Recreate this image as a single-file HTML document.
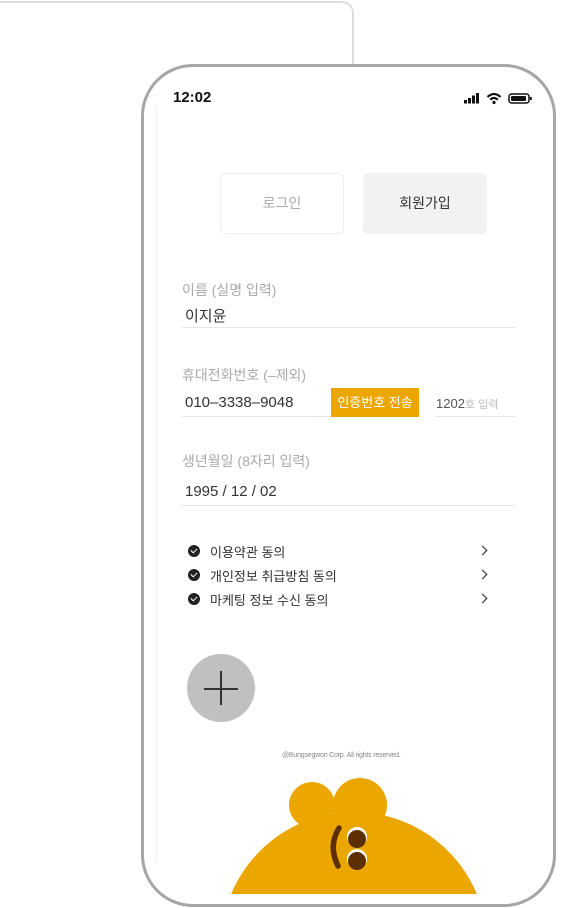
<!DOCTYPE html>
<html><head><meta charset="utf-8"><style>
*{margin:0;padding:0;box-sizing:border-box}
html,body{width:566px;height:908px;overflow:hidden}
body{background:#fff;position:relative;font-family:"Liberation Sans","Noto Sans CJK KR",sans-serif}
.back{position:absolute;left:-20px;top:1px;width:374px;height:860px;border:2px solid #ddd;border-bottom:none;border-radius:12px 12px 0 0}
.phone{position:absolute;left:141px;top:64px;width:415px;height:843px;border:3px solid #a6a6a6;border-radius:52px;background:#fff;overflow:hidden}
.abs{position:absolute}
.lbl{color:#aaa;font-size:14px}
.val{color:#333;font-size:15px}
.line{height:1px;background:#e6e6e6}
.chk{position:absolute;left:188px;width:12px;height:12px;border-radius:50%;background:#222}
.chk:after{content:"";position:absolute;left:3px;top:2.5px;width:5px;height:3px;border-left:1.6px solid #fff;border-bottom:1.6px solid #fff;transform:rotate(-45deg)}
.ag{position:absolute;left:210px;font-size:13px;color:#333}
.arr{position:absolute;left:479px;width:7px;height:7px;border-top:1.8px solid #222;border-right:1.8px solid #222;transform:rotate(45deg)}
</style></head><body>
<div class="back"></div>
<div class="phone"></div>
<div class="abs" style="left:156px;top:105px;width:1px;height:756px;background:#eee"></div>
<div class="abs" style="left:173px;top:89px;font-size:15px;font-weight:bold;color:#111">12:02</div>
<svg class="abs" style="left:463px;top:92px" width="74" height="13" viewBox="0 0 74 12">
<rect x="1" y="7.5" width="3" height="3.5" fill="#111"/><rect x="5" y="5.5" width="3" height="5.5" fill="#111"/><rect x="9" y="3" width="3" height="8" fill="#111"/><rect x="13" y="0.5" width="3" height="10.5" fill="#111"/>
<path d="M24.5 4.5 Q31 -1.5 37.5 4.5" stroke="#111" stroke-width="2.2" fill="none"/><path d="M27.2 7.2 Q31 3.8 34.8 7.2" stroke="#111" stroke-width="2.2" fill="none"/><circle cx="31" cy="10" r="1.6" fill="#111"/>
<rect x="46" y="1.5" width="20" height="9" rx="2.5" stroke="#111" stroke-width="1.5" fill="none"/><rect x="48" y="3.5" width="15" height="5" rx="1" fill="#111"/><rect x="67" y="4.5" width="1.8" height="3" fill="#111"/>
</svg>
<div class="abs" style="left:220px;top:173px;width:124px;height:61px;border:1px solid #eee;border-radius:6px;color:#aaa;font-size:14px;text-align:center;line-height:59px">로그인</div>
<div class="abs" style="left:363px;top:173px;width:124px;height:61px;background:#f2f2f2;border-radius:6px;color:#333;font-size:14px;text-align:center;line-height:61px">회원가입</div>
<div class="abs lbl" style="left:182px;top:280px">이름 (실명 입력)</div>
<div class="abs val" style="left:185px;top:305px">이지윤</div>
<div class="abs line" style="left:182px;top:327px;width:333px"></div>
<div class="abs lbl" style="left:182px;top:365px">휴대전화번호 (–제외)</div>
<div class="abs val" style="left:185px;top:394px">010–3338–9048</div>
<div class="abs line" style="left:182px;top:416px;width:150px"></div>
<div class="abs" style="left:331px;top:388px;width:88px;height:29px;background:#eba600;color:#fff;font-size:13px;text-align:center;line-height:29px">인증번호 전송</div>
<div class="abs" style="left:436px;top:396px;font-size:13px;color:#555">1202<span style="color:#bbb;font-size:11px">호 입력</span></div>
<div class="abs line" style="left:435px;top:416px;width:80px"></div>
<div class="abs lbl" style="left:182px;top:451px">생년월일 (8자리 입력)</div>
<div class="abs val" style="left:185px;top:483px">1995 / 12 / 02</div>
<div class="abs line" style="left:182px;top:505px;width:333px"></div>
<div class="chk" style="top:545px"></div><div class="ag" style="top:542px">이용약관 동의</div><div class="arr" style="top:547px"></div>
<div class="chk" style="top:569px"></div><div class="ag" style="top:566px">개인정보 취급방침 동의</div><div class="arr" style="top:571px"></div>
<div class="chk" style="top:593px"></div><div class="ag" style="top:590px">마케팅 정보 수신 동의</div><div class="arr" style="top:595px"></div>
<div class="abs" style="left:187px;top:654px;width:68px;height:68px;border-radius:50%;background:#c0c0c0"></div>
<div class="abs" style="left:204px;top:688px;width:34px;height:1.5px;background:#333"></div>
<div class="abs" style="left:220px;top:671px;width:1.5px;height:34px;background:#333"></div>
<div class="abs" style="left:282px;top:752px;font-size:7px;color:#888;letter-spacing:-0.2px">@Bungsegwon Corp. All rights reserved.</div>
<svg class="abs" style="left:0;top:770px" width="566" height="124" viewBox="0 770 566 124">
<circle cx="312" cy="805" r="23" fill="#eba600"/><circle cx="360" cy="805" r="27" fill="#eba600"/>
<circle cx="354" cy="945" r="133" fill="#eba600"/>
<path d="M339 828 Q328 846 338 866" stroke="#5c2e00" stroke-width="5.5" fill="none" stroke-linecap="round"/>
<circle cx="357" cy="837" r="10" fill="#fff"/><circle cx="357" cy="839" r="9" fill="#5c2e00"/>
<circle cx="357" cy="859" r="10" fill="#fff"/><circle cx="357" cy="861" r="9" fill="#5c2e00"/>
</svg>
</body></html>
